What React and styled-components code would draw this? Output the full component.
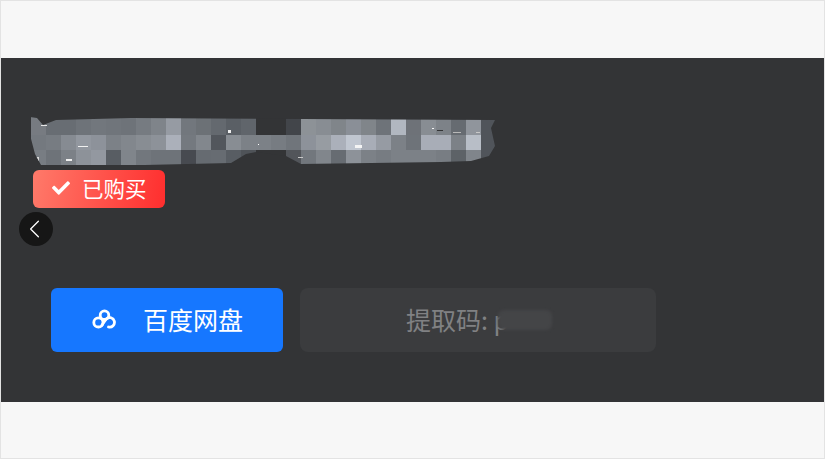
import React from 'react';
import styled, { createGlobalStyle } from 'styled-components';
import { FaCheck } from 'react-icons/fa';
import { FiChevronLeft } from 'react-icons/fi';

const GlobalStyle = createGlobalStyle`
  html, body {
    margin: 0;
    padding: 0;
    background: #f7f7f7;
  }
  * {
    box-sizing: border-box;
  }
`

const Page = styled.div`
  width: 825px;
  height: 459px;
  padding-top: 57px;
  background: #f7f7f7;
  border: 1px solid #e3e3e3;
  font-family: "Noto Sans CJK SC", "Liberation Sans", sans-serif;
  overflow: hidden;
`

const Panel = styled.section`
  position: relative;
  height: 344px;
  padding: 58px 0 0 28px;
  background: #333436;
`

const Title = styled.div`
  height: 54px;
  line-height: 0;
`

const Bought = styled.div`
  display: flex;
  align-items: center;
  gap: 12px;
  width: 132px;
  height: 38px;
  margin-left: 4px;
  padding: 0 0 2px 19px;
  border-radius: 6px;
  background: linear-gradient(100deg, #ff7a6a 0%, #ff2e2e 100%);
  color: #fff;
  font-size: 21.5px;
  line-height: 36px;
`

const BackButton = styled.button`
  position: absolute;
  top: 154px;
  left: 18px;
  display: flex;
  align-items: center;
  justify-content: center;
  width: 34px;
  height: 34px;
  padding: 0 3px 0 0;
  border: 0;
  border-radius: 50%;
  background: #161616;
  color: #fff;
`

const Actions = styled.div`
  display: flex;
  gap: 17px;
  margin: 80px 0 0 22px;
`

const DiskButton = styled.button`
  display: flex;
  align-items: center;
  gap: 25px;
  width: 232px;
  height: 64px;
  padding: 0 0 2px 41px;
  border: 0;
  border-radius: 6px;
  background: #1677ff;
  color: #fff;
  font-family: inherit;
  font-size: 25px;
`

const CodeBox = styled.div`
  display: flex;
  align-items: center;
  justify-content: center;
  width: 356px;
  height: 64px;
  padding: 0 0 2px 2px;
  border-radius: 8px;
  background: #3b3c3e;
  color: #808183;
  font-size: 25px;
  white-space: pre;
`

const CodeMask = styled.span`
  position: relative;
  display: inline-block;
  width: 54px;
  height: 20px;
  margin: 2px 0 0 -11px;
  border-radius: 6px;
  background: #444547;
  filter: blur(1.5px);
`

const cells = [
  ['#6f7174', '#606366', '#606366', '#66696c', '#6a6d70', '#686b6e', '#66696c', '#6e7174', '#777a7d', '#8e9196', '#6a6d70', '#646769', '#5c5f62', '#525558', '#585b5e', '#333436', '#333436', '#3a3b3d', '#85888a', '#808386', '#787b7d', '#82858a', '#787b7d', '#66696c', '#a9adb3', '#66686b', '#808386', '#75787b', '#5e6164', '#888b8f', '#484a4d'],
  ['#6c6f72', '#6f7275', '#7e8185', '#8a8d92', '#85888d', '#74777a', '#7a7d80', '#808386', '#85888c', '#a3a6ad', '#6c6f72', '#7a7d80', '#4a4c4f', '#808386', '#74777a', '#74777a', '#6f7275', '#686b6e', '#85888d', '#8f9295', '#a3a6ad', '#b8bcc3', '#a0a3aa', '#8e9196', '#74777a', '#66696c', '#a0a3aa', '#a0a3aa', '#74777a', '#b0b4ba', '#484a4d'],
  ['#707376', '#66696c', '#74777a', '#85888c', '#8b8e93', '#505356', '#787b7e', '#6a6d70', '#66696c', '#66696c', '#3f4043', '#5e6164', '#5f6265', '#505356', '#47494b', '#333436', '#333436', '#4a4b4d', '#6a6d70', '#797c7f', '#5f6265', '#85888c', '#74777a', '#6f7275', '#74777a', '#74777a', '#74777a', '#707376', '#55585a', '#787b7e', '#484a4d'],
];

const flecks = [
  [40, 125, 6, 1, '#e6e6e6'],
  [77, 146, 10, 1, '#f0f0f0'],
  [65, 159, 6, 2, '#f0f0f0'],
  [35, 157, 3, 5, '#d8d8d8'],
  [227, 130, 3, 3, '#eeeeee'],
  [257, 144, 1, 1, '#ffffff'],
  [297, 157, 5, 1, '#c8c8c8'],
  [354, 145, 7, 3, '#f4f4f4'],
  [431, 128, 2, 1, '#f4f4f4'],
  [436, 130, 6, 1, '#333436'],
  [452, 132, 8, 1, '#b8b8b8'],
  [475, 132, 4, 1, '#c8c8c8'],
];

// the reference mosaic reads a little lighter and bluer than the sampled greys
const lighten = (hex) => {
  const n = parseInt(hex.slice(1), 16);
  if (hex === '#333436') return hex;
  const r = Math.min(255, (n >> 16) + 8);
  const g = Math.min(255, ((n >> 8) & 255) + 10);
  const b = Math.min(255, (n & 255) + 13);
  return `rgb(${r},${g},${b})`;
};

// mosaic that hides the product name
const TitleMosaic = () => (
  <svg width="470" height="54" viewBox="28 116 470 54">
    <clipPath id="mosaic-edge">
      <path d="M29 117 L36 118 L42 125 L55 120 L130 118 L494 120 L490 128 L494 146 L488 156 L470 161 L440 162 L300 164 L285 156 L255 152 L245 154 L230 163 L100 166 L50 166 L40 165 L34 154 L29 135Z" />
    </clipPath>
    <g clipPath="url(#mosaic-edge)">
      {cells.map((row, r) =>
        row.map((fill, c) => (
          <rect key={`${r}-${c}`} x={30 + c * 15} y={r === 0 ? 115 : 120 + r * 15} width="15" height={r === 0 ? 20 : 15} fill={lighten(fill)} />
        ))
      )}
      {flecks.map(([x, y, w, h, fill]) => (
        <rect key={`${x}-${y}`} x={x} y={y} width={w} height={h} fill={fill} />
      ))}
    </g>
  </svg>
);

const CloudIcon = () => (
  <svg width="26" height="20" viewBox="0 0 26 20" fill="none" stroke="#fff" strokeWidth="2.8" strokeLinecap="round">
    <circle cx="12.5" cy="6.2" r="4.3" />
    <circle cx="6.4" cy="13.4" r="4.6" />
    <path d="M16.5 18 A4.8 4.8 0 1 0 14.4 9.8 L10 16" />
  </svg>
);

const App = () => (
  <Page>
    <GlobalStyle />
    <Panel>
      <Title>
        <TitleMosaic />
      </Title>
      <Bought>
        <FaCheck size={18} />
        已购买
      </Bought>
      <BackButton aria-label="back">
        <FiChevronLeft size={34} strokeWidth={1} />
      </BackButton>
      <Actions>
        <DiskButton>
          <CloudIcon />
          百度网盘
        </DiskButton>
        <CodeBox>
          提取码: p
          <CodeMask />
        </CodeBox>
      </Actions>
    </Panel>
  </Page>
);

export default App;
